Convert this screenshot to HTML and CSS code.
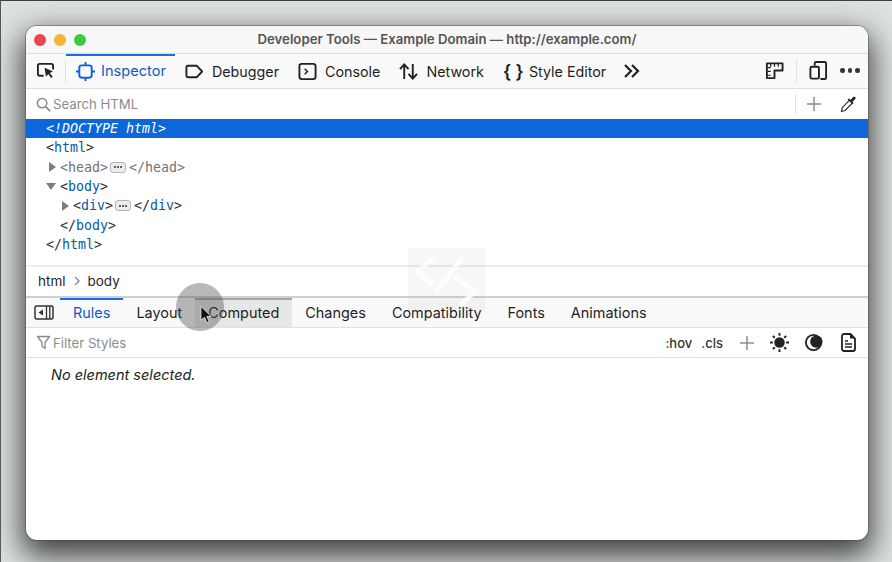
FILE: index.html
```html
<!DOCTYPE html>
<html lang="en">
<head>
<meta charset="utf-8">
<title>Developer Tools</title>
<link rel="stylesheet" href="styles.css">
</head>
<body>
<div class="window">
  <header class="titlebar">
    <div class="lights"><span class="light red"></span><span class="light yellow"></span><span class="light green"></span></div>
    <div class="title">Developer Tools — Example Domain — http://example.com/</div>
  </header>

  <nav class="toolbar">
    <svg class="icon picker" viewBox="0 0 20 20"><path d="M8 15.500H4a2 2 0 0 1-2-2V5a2 2 0 0 1 2-2h12a2 2 0 0 1 2 2v4" fill="none" stroke="#222" stroke-width="2"/><path d="M9 7l9 4-3.600 1.500 3.200 4-1.700 1.300-3-4L10.500 16.500z" fill="#222"/></svg>
    <span class="vsep picker-sep"></span>
    <a class="tool active">
      <svg class="icon" viewBox="0 0 20 20"><rect x="3.500" y="3.500" width="13" height="13" rx="2.500" fill="none" stroke="#0b62d6" stroke-width="2"/><path d="M10 0v3.500M10 16.500V20M0 10h3.500M16.500 10H20" stroke="#0b62d6" stroke-width="2"/></svg>
      Inspector
    </a>
    <a class="tool">
      <svg class="icon" viewBox="0 0 20 20"><path d="M3 4h9.500L18 10l-5.500 6H3a1.500 1.500 0 0 1-1.500-1.500v-9A1.500 1.500 0 0 1 3 4z" fill="none" stroke="#222" stroke-width="2" stroke-linejoin="round"/></svg>
      Debugger
    </a>
    <a class="tool">
      <svg class="icon" viewBox="0 0 20 20"><rect x="1.500" y="2" width="17" height="16" rx="2.500" fill="none" stroke="#222" stroke-width="2"/><path d="M7 7l3 3-3 3" fill="none" stroke="#222" stroke-width="1.500"/></svg>
      Console
    </a>
    <a class="tool">
      <svg class="icon" viewBox="0 0 20 20"><path d="M5.500 18V3M1 7.500l4.500-5 4.500 5M14.500 2v15M10 12.500l4.500 5 4.500-5" fill="none" stroke="#222" stroke-width="2"/></svg>
      Network
    </a>
    <a class="tool tool-style">
      <span class="braces">{ }</span>
      Style Editor
    </a>
    <svg class="icon chevrons" viewBox="0 0 18 16"><path d="M2 2l6 6-6 6M9 2l6 6-6 6" fill="none" stroke="#222" stroke-width="2.200"/></svg>
    <div class="toolbar-right">
      <svg class="icon" viewBox="0 0 20 20"><path d="M2 2.500h16.500v7.500H10v8H2z" fill="none" stroke="#222" stroke-width="2" stroke-linejoin="round"/><path d="M6 3v3M10 3v3M14 3v3M3 7h3M3 11h3M3 15h3" stroke="#222" stroke-width="1.300"/></svg>
      <span class="vsep"></span>
      <svg class="icon device" viewBox="0 0 20 20"><path d="M6 5V2.500A1.500 1.500 0 0 1 7.500 1h9A1.500 1.500 0 0 1 18 2.500v15a1.500 1.500 0 0 1-1.500 1.500H12" fill="none" stroke="#222" stroke-width="2"/><rect x="1.500" y="6" width="9" height="12.500" rx="1.500" fill="none" stroke="#222" stroke-width="2"/></svg>
      <span class="dots"><i></i><i></i><i></i></span>
    </div>
  </nav>

  <div class="searchbar">
    <svg class="icon-sm" viewBox="0 0 16 16"><circle cx="6.500" cy="6.500" r="5" fill="none" stroke="#8a8a8a" stroke-width="1.600"/><path d="M10 10l5 5" stroke="#8a8a8a" stroke-width="1.800"/></svg>
    <span class="placeholder">Search HTML</span>
    <div class="search-actions">
      <span class="vsep short"></span>
      <svg class="icon plus" viewBox="0 0 16 16"><path d="M8 1v14M1 8h14" stroke="#8f8f8f" stroke-width="1.500"/></svg>
      <svg class="icon dropper" viewBox="0 0 18 18"><path d="M10.500 5l3 3-7.500 7.500-3.500 1 .8-3.800z" fill="#fff" stroke="#333" stroke-width="1.200"/><path d="M10 3.500l1.500 1.500 3-3.200a1.500 1.500 0 0 1 2 2L13.300 7l1.200 1.200-1 1-5-5z" fill="#222"/></svg>
    </div>
  </div>

  <div class="markup">
    <div class="row selected"><i>&lt;!DOCTYPE html&gt;</i></div>
    <div class="row">&lt;<b>html</b>&gt;</div>
    <div class="row lvl1 dim"><span class="tw right"></span>&lt;head&gt;<span class="more"><i></i><i></i><i></i></span>&lt;/head&gt;</div>
    <div class="row lvl1"><span class="tw down"></span>&lt;<b>body</b>&gt;</div>
    <div class="row lvl2"><span class="tw right"></span>&lt;<b>div</b>&gt;<span class="more"><i></i><i></i><i></i></span>&lt;/<b>div</b>&gt;</div>
    <div class="row lvl1">&lt;/<b>body</b>&gt;</div>
    <div class="row">&lt;/<b>html</b>&gt;</div>
  </div>

  <div class="breadcrumbs">
    <span>html</span>
    <svg class="crumb-sep" viewBox="0 0 8 10"><path d="M2 1l4 4-4 4" fill="none" stroke="#8a8a8a" stroke-width="1.400"/></svg>
    <span>body</span>
  </div>

  <div class="tabs">
    <svg class="panel-toggle" viewBox="0 0 20 15"><rect x="1" y="1" width="18" height="13" rx="1.500" fill="none" stroke="#333" stroke-width="1.500"/><path d="M12.500 1v13M15.800 1v13" stroke="#333" stroke-width="1.300"/><path d="M9 4.500v6L4.500 7.500z" fill="#333"/></svg>
    <a class="tab active">Rules</a>
    <a class="tab">Layout</a>
    <a class="tab hover">Computed</a>
    <a class="tab">Changes</a>
    <a class="tab">Compatibility</a>
    <a class="tab">Fonts</a>
    <a class="tab">Animations</a>
  </div>

  <div class="filterbar">
    <svg class="icon-sm" viewBox="0 0 14 15"><path d="M1 1.500h12L8.500 7.500v6l-3-2v-4z" fill="none" stroke="#8a8a8a" stroke-width="1.300" stroke-linejoin="round"/></svg>
    <span class="placeholder">Filter Styles</span>
    <div class="filter-actions">
      <span class="pseudo">:hov</span>
      <span class="pseudo">.cls</span>
      <svg class="icon plus" viewBox="0 0 16 16"><path d="M8 1v14M1 8h14" stroke="#8f8f8f" stroke-width="1.500"/></svg>
      <svg class="icon" viewBox="0 0 20 20"><circle cx="10" cy="10" r="5.500" fill="#222"/><path d="M10 0v3M10 17v3M0 10h3M17 10h3M3 3l2 2M15 15l2 2M3 17l2-2M15 5l2-2" stroke="#222" stroke-width="2"/></svg>
      <svg class="icon moon" viewBox="0 0 20 20"><circle cx="10" cy="10" r="9" fill="#222"/><circle cx="10" cy="10" r="7" fill="#fff"/><circle cx="13" cy="9" r="6.500" fill="#222"/></svg>
      <svg class="icon page" viewBox="0 0 15 19"><path d="M3 1h6.500L14 5.500V16a2 2 0 0 1-2 2H3a2 2 0 0 1-2-2V3a2 2 0 0 1 2-2z" fill="none" stroke="#222" stroke-width="1.800"/><path d="M9 1v4.500h5" fill="#222"/><path d="M4 8h3M4 11h7M4 14h7" stroke="#222" stroke-width="1.300"/></svg>
    </div>
  </div>

  <div class="rules"><em>No element selected.</em></div>
</div>

<div class="watermark">
  <svg viewBox="0 0 77 77"><path d="M25.300 10.300L8.700 23.700 25.300 37M53.700 10.300L27 45M47 28.700L67 43.700 52 57" fill="none" stroke="#fff" stroke-width="5"/></svg>
</div>
<div class="click-ring"></div>
<svg class="cursor" viewBox="0 0 13 20"><path d="M1 0l11 11H7.500l2.500 6-2.500 1-2.500-6L1 15z" fill="#111" stroke="#fff" stroke-width=".8"/></svg>
</body>
</html>
```

FILE: styles.css
```css
* { box-sizing: border-box; }
html, body { height: 100%; }
body {
  margin: 0;
  padding: 25px 24px 0 25px;
  height: 562px;
  overflow: hidden;
  background: #dde1e1;
  border-top: 1px solid #3c3f41;
  border-left: 1px solid #55585a;
  font-family: Inter, "Liberation Sans", sans-serif;
  color: #1f1f1f;
  position: relative;
}
.window {
  width: 842px;
  height: 514px;
  background: #fff;
  border-radius: 11px;
  overflow: hidden;
  box-shadow: 0 0 0 1px rgba(70,70,70,.45), 0 12px 30px 4px rgba(0,0,0,.72);
  display: flex;
  flex-direction: column;
}
.titlebar {
  height: 28px;
  flex: none;
  display: flex;
  align-items: center;
  justify-content: center;
  position: relative;
  background: #f7f7f7;
  border-bottom: 1px solid #dcdcdc;
}
.lights { position: absolute; left: 8px; top: 8px; display: flex; gap: 8px; }
.light { width: 12px; height: 12px; border-radius: 50%; }
.red { background: #ec4550; }
.yellow { background: #f5b431; }
.green { background: #3ccb3f; }
.title { font-size: 13.200px; font-weight: 600; color: #555; padding-bottom: 1px; }

.toolbar {
  height: 35px;
  flex: none;
  display: flex;
  align-items: center;
  padding: 0 0 1px 10px;
  background: #f9f9fa;
  border-bottom: 1px solid #e0e0e0;
  font-size: 14.300px;
}
.icon { width: 19px; height: 19px; flex: none; display: block; }
.picker { margin-right: 10px; }
.vsep { width: 1px; height: 24px; background: #e2e2e2; flex: none; }
.picker-sep { margin-right: 0; }
.tool {
  align-self: flex-start;
  height: 34px;
  display: flex;
  align-items: center;
  gap: 8px;
  padding: 0 9px 2px 10px;
  border-top: 2px solid transparent;
  white-space: nowrap;
  color: #1f1f1f;
}
.tool.active { color: #0b5fc4; border-top-color: #1a6fe0; gap: 6px; font-size: 14.600px; }
.tool-style { gap: 7px; }
.braces { width: 19px; font-size: 18px; font-weight: 600; line-height: 19px; text-align: center; white-space: nowrap; }
.chevrons { width: 18px; height: 16px; margin-left: 8px; }
.toolbar-right { margin-left: auto; display: flex; align-items: center; margin-right: 8px; }
.toolbar-right .vsep { margin: 0 12px; }
.device { margin-right: 12px; }
.dots { display: flex; gap: 3px; width: 20px; }
.dots i { width: 4.500px; height: 4.500px; border-radius: 50%; background: #333; }

.searchbar, .filterbar {
  height: 30px;
  flex: none;
  display: flex;
  align-items: center;
  padding-left: 10px;
  background: #fff;
  font-size: 13.200px;
}
.icon-sm { width: 15px; height: 15px; flex: none; }
.placeholder { color: #8c8c8c; margin-left: 2px; }
.search-actions { margin-left: auto; display: flex; align-items: center; margin-right: 11px; }
.search-actions .vsep { height: 20px; margin-right: 10px; }
.plus { width: 16px; height: 16px; }
.dropper { width: 18px; height: 18px; margin-left: 17px; }

.markup {
  height: 148px;
  flex: none;
  font-family: "DejaVu Sans Mono", monospace;
  font-size: 13.300px;
  border-bottom: 2px solid #ececec;
  color: #2a2a2a;
}
.row { height: 19.300px; line-height: 19px; padding-left: 20px; display: flex; align-items: center; white-space: pre; }
.row b { font-weight: 400; color: #0b57a8; }
.row.selected { background: #0c68da; color: #fff; }
.lvl1 { padding-left: 34px; }
.lvl2 { padding-left: 47px; }
.dim { color: #737373; }
.tw { width: 0; height: 0; }
.tw.right { border-left: 7px solid #7d7d7d; border-top: 5px solid transparent; border-bottom: 5px solid transparent; margin: 0 4px 0 -11px; }
.tw.down { border-top: 7px solid #7d7d7d; border-left: 5px solid transparent; border-right: 5px solid transparent; margin: 0 4px 0 -14px; }
.more {
  width: 16px; height: 11px;
  margin: 0 3px 0 2px;
  display: inline-flex;
  gap: 1px;
  align-items: center;
  justify-content: center;
  background: #ececec;
  border: 1px solid #b5b5b5;
  border-radius: 3px;
}
.more i { width: 2px; height: 2px; background: #333; border-radius: 50%; }

.breadcrumbs {
  height: 29px;
  flex: none;
  display: flex;
  align-items: center;
  gap: 7px;
  padding: 0 0 2px 12px;
  font-size: 13.500px;
}
.crumb-sep { width: 8px; height: 10px; }

.tabs {
  height: 32px;
  flex: none;
  display: flex;
  align-items: stretch;
  background: #f9f9fa;
  border-top: 2px solid #cfd0d1;
  border-bottom: 1px solid #e0e0e0;
  font-size: 14.450px;
  padding-left: 8px;
}
.panel-toggle { width: 20px; height: 15px; align-self: center; margin-right: 6px; }
.tab {
  padding: 0 13px 2px;
  display: flex;
  align-items: center;
  border-top: 2px solid transparent;
  color: #1f1f1f;
}
.tab.active { color: #0b5fc4; border-top-color: #1a6fe0; }
.tab.hover { background: #e6e7e7; border-top-color: #a6a8a9; }

.filterbar { border-bottom: 1px solid #e0e0e0; }
.filter-actions { margin-left: auto; display: flex; align-items: center; gap: 15px; margin-right: 12px; font-size: 13px; }
.pseudo { font-weight: 500; color: #333; margin-right: -6px; }
.filter-actions .plus { margin-left: 7px; }
.page { width: 15px; height: 19px; margin-left: 3px; }

.rules { padding: 7px 0 0 25px; font-size: 14.500px; line-height: 19px; color: #222; }

.watermark {
  position: absolute;
  left: 407px; top: 247px;
  width: 77px; height: 62px;
  overflow: hidden;
  background: rgba(120,120,120,.06);
}
.watermark svg { width: 77px; height: 77px; display: block; opacity: .8; }
.click-ring {
  position: absolute;
  left: 175px; top: 282px;
  width: 48px; height: 48px;
  border-radius: 50%;
  background: rgba(70,70,70,.38);
}
.cursor { position: absolute; left: 199px; top: 305px; width: 12px; height: 19px; }
```
